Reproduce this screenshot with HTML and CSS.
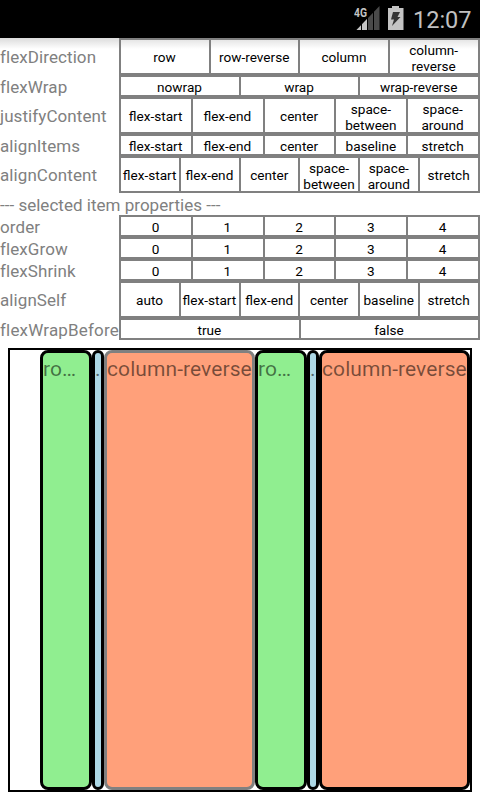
FILE: index.html
```html
<!DOCTYPE html>
<html lang="en">
<head>
<meta charset="utf-8">
<title>Flexbox</title>
<link rel="stylesheet" href="styles.css">
</head>
<body>
<header class="status">
  <svg class="signal" width="28" height="26" viewBox="0 0 28 26">
    <path d="M25.500 0V24H2.500Z" fill="#4a4a4a"/>
    <path d="M13.500 12.500V24H2.500Z" fill="#c4c4c4"/>
    <path d="M7.500 14V25M13.500 8V25M19.500 1V25" stroke="#000" stroke-width="1"/>
    <text class="network" x="0" y="11" textLength="13" lengthAdjust="spacingAndGlyphs">4G</text>
  </svg>
  <svg class="battery" width="16" height="24" viewBox="0 0 16 24">
    <path d="M4 0h7v2h4.500v22H0V2h4Z" fill="#c4c4c4"/>
    <path d="M5 6h7l-2.500 5h3L4 20l2-6.500H3Z" fill="#333"/>
  </svg>
  <span class="clock">12:07</span>
</header>
<main>
  <div class="panel">
    <div class="row tall"><span class="label">flexDirection</span><div class="options"><b>row</b><b>row-reverse</b><b>column</b><b class="two">column-<br>reverse</b></div></div>
    <div class="row short"><span class="label">flexWrap</span><div class="options"><b>nowrap</b><b>wrap</b><b>wrap-reverse</b></div></div>
    <div class="row tall"><span class="label">justifyContent</span><div class="options"><b>flex-start</b><b>flex-end</b><b>center</b><b class="two">space-<br>between</b><b class="two">space-<br>around</b></div></div>
    <div class="row short"><span class="label">alignItems</span><div class="options"><b>flex-start</b><b>flex-end</b><b>center</b><b>baseline</b><b>stretch</b></div></div>
    <div class="row tall"><span class="label">alignContent</span><div class="options"><b>flex-start</b><b>flex-end</b><b>center</b><b class="two">space-<br>between</b><b class="two">space-<br>around</b><b>stretch</b></div></div>
    <div class="row short"><span class="label heading">--- selected item properties ---</span></div>
    <div class="row short"><span class="label">order</span><div class="options"><b>0</b><b>1</b><b>2</b><b>3</b><b>4</b></div></div>
    <div class="row short"><span class="label">flexGrow</span><div class="options"><b>0</b><b>1</b><b>2</b><b>3</b><b>4</b></div></div>
    <div class="row short"><span class="label">flexShrink</span><div class="options"><b>0</b><b>1</b><b>2</b><b>3</b><b>4</b></div></div>
    <div class="row tall"><span class="label">alignSelf</span><div class="options"><b>auto</b><b>flex-start</b><b>flex-end</b><b>center</b><b>baseline</b><b>stretch</b></div></div>
    <div class="row short"><span class="label long">flexWrapBefore</span><div class="options pair"><b>true</b><b>false</b></div></div>
  </div>
  <div class="stage">
    <div class="item green">ro…</div>
    <div class="item blue">.</div>
    <div class="item salmon selected">column-reverse</div>
    <div class="item green">ro…</div>
    <div class="item blue">.</div>
    <div class="item salmon">column-reverse</div>
  </div>
</main>
</body>
</html>
```
FILE: styles.css
```css
* { box-sizing: border-box; }
body {
  margin: 0;
  width: 480px;
  height: 800px;
  overflow: hidden;
  background: #fff;
  font-family: Roboto, sans-serif;
}
.status {
  display: flex;
  height: 38px;
  padding: 6px 10px 0 0;
  justify-content: flex-end;
  background: #000;
}
.signal { margin-right: 6px; }
.network { font-size: 13px; font-weight: 700; fill: #c4c4c4; }
.battery { margin-right: 9px; }
.clock {
  width: 57px;
  color: #c0c0c0;
  font-size: 23.5px;
  line-height: 28px;
  white-space: nowrap;
}
.panel {
  height: 302px;
  background: linear-gradient(#dcdcdc, #fff 11px);
}
.row {
  display: flex;
  height: 22px;
  align-items: center;
}
.tall { height: 37px; }
.label {
  width: 119px;
  flex: none;
  color: #808080;
  font-size: 17px;
  line-height: 20px;
  letter-spacing: 0.08px;
  white-space: nowrap;
}
.heading { letter-spacing: 0.02px; }
.long { letter-spacing: 0.18px; }
.short .label { padding-top: 1px; }
.options {
  display: grid;
  grid-auto-flow: column;
  grid-auto-columns: minmax(0, 1fr);
  gap: 2px;
  width: 360.8px;
  height: 100%;
  border: 2px solid #808080;
  background: #808080;
}
.pair { width: 361px; }
.options b {
  display: flex;
  align-items: center;
  justify-content: center;
  min-height: 0;
  padding-right: 0.6px;
  background: #fff;
  color: #000;
  font-size: 13.6px;
  font-weight: 400;
  line-height: 16px;
  text-align: center;
  white-space: nowrap;
}
.short b, .options .two { padding-top: 2px; }
.row:first-child b { background: linear-gradient(#e6e6e6, #fff 9px); }
.stage {
  display: flex;
  justify-content: flex-end;
  width: 464px;
  height: 444px;
  margin: 8px;
  border: 2px solid #000;
}
.item {
  flex: none;
  border: 3px solid #000;
  border-radius: 8px;
  color: rgba(0, 0, 0, 0.53);
  font-size: 21px;
  line-height: 32px;
  letter-spacing: 0.08px;
  white-space: nowrap;
}
.green { width: 52px; background: #90ee90; }
.blue { width: 12px; background: #add8e6; }
.salmon { width: 151px; background: #ffa07a; }
.selected { border-color: #808080; }
```
